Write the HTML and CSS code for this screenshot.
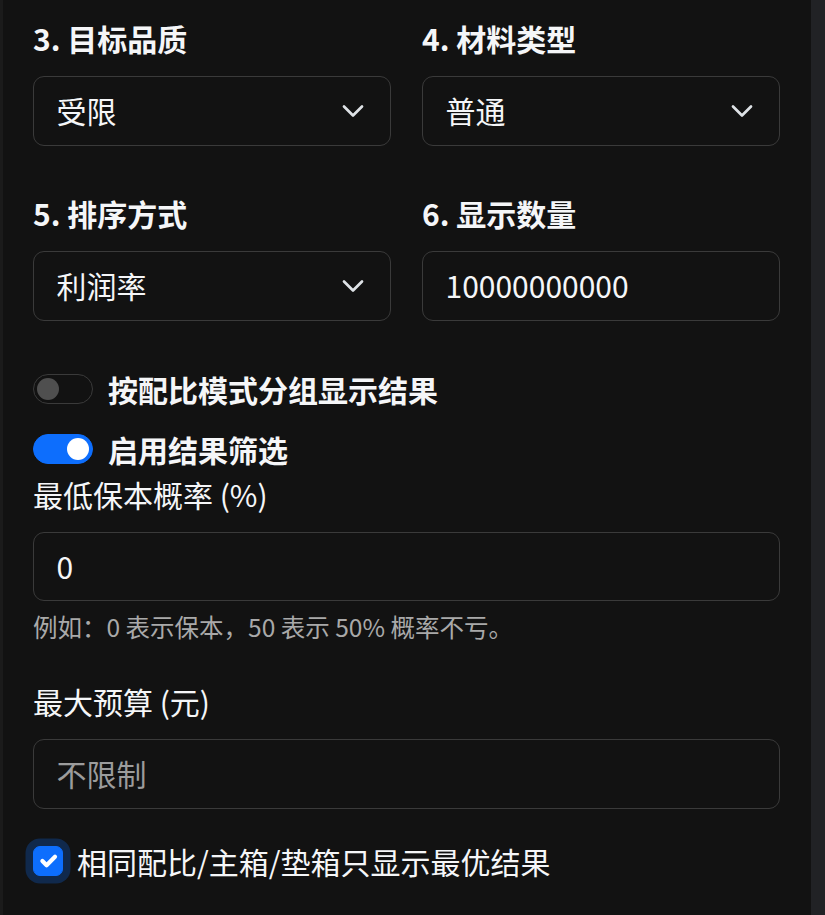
FILE: index.html
```html
<!DOCTYPE html>
<html lang="zh-CN">
<head>
<meta charset="utf-8">
<title>筛选设置</title>
<link rel="stylesheet" href="styles.css">
</head>
<body>
<div class="page">
  <div class="edge-left"></div>
  <main class="panel">
    <div class="field-grid">
      <div class="field">
        <div class="label">3. 目标品质</div>
        <div class="control select"><span>受限</span><svg class="chevron" viewBox="0 0 16 16"><path d="m2 5 6 6 6-6"/></svg></div>
      </div>
      <div class="field">
        <div class="label">4. 材料类型</div>
        <div class="control select"><span>普通</span><svg class="chevron" viewBox="0 0 16 16"><path d="m2 5 6 6 6-6"/></svg></div>
      </div>
      <div class="field">
        <div class="label">5. 排序方式</div>
        <div class="control select"><span>利润率</span><svg class="chevron" viewBox="0 0 16 16"><path d="m2 5 6 6 6-6"/></svg></div>
      </div>
      <div class="field">
        <div class="label">6. 显示数量</div>
        <div class="control"><span>10000000000</span></div>
      </div>
    </div>

    <div class="switch-row first">
      <span class="switch"><span class="knob"></span></span>
      <span>按配比模式分组显示结果</span>
    </div>
    <div class="switch-row">
      <span class="switch on"><span class="knob"></span></span>
      <span>启用结果筛选</span>
    </div>

    <div class="label plain">最低保本概率 (%)</div>
    <div class="control"><span>0</span></div>
    <div class="help">例如：0 表示保本，50 表示 50% 概率不亏。</div>

    <div class="label plain">最大预算 (元)</div>
    <div class="control"><span class="placeholder">不限制</span></div>

    <div class="check-row">
      <span class="checkbox"><svg viewBox="0 0 20 20"><path d="m6 10 3 3 6-6"/></svg></span>
      <span>相同配比/主箱/垫箱只显示最优结果</span>
    </div>
  </main>
  <div class="edge-right"></div>
</div>
</body>
</html>
```

FILE: styles.css
```css
* { box-sizing: border-box; }
html, body { margin: 0; height: 100%; }
body {
  background: #121212;
  color: #f5f6f8;
  font-family: "Noto Sans CJK SC", "Noto Sans", sans-serif;
  font-size: 30px;
  line-height: 45px;
  overflow: hidden;
}
.page { display: flex; height: 915px; }
.edge-left { width: 3px; background: #1b1b1b; }
.edge-right { width: 14px; background: #212225; }
.panel { flex: 1; padding: 16px 31px 0 30px; }

.field-grid {
  display: grid;
  grid-template-columns: 1fr 1fr;
  column-gap: 31px;
  row-gap: 45.5px;
  margin-bottom: 46px;
}
.label { display: block; margin-bottom: 15px; font-weight: 700; }
.label.plain { font-weight: 400; }

.control {
  display: flex;
  align-items: center;
  height: 69.5px;
  padding: 0 22.5px;
  border: 1px solid #3a3a3a;
  border-radius: 11px;
  background: #121212;
  color: #f5f6f8;
}
.select { justify-content: space-between; padding-right: 25px; }
.chevron {
  width: 24px;
  height: 24px;
  fill: none;
  stroke: #dee2e6;
  stroke-width: 1.8;
  stroke-linecap: round;
  stroke-linejoin: round;
}
.placeholder { color: #9c9c9c; }

.switch-row {
  display: flex;
  align-items: center;
  gap: 15px;
  height: 45px;
  font-weight: 700;
}
.switch-row.first { margin-bottom: 15px; }
.switch {
  display: flex;
  align-items: center;
  width: 60px;
  height: 30px;
  padding: 0 2.75px;
  border: 1px solid #3a3a3a;
  border-radius: 15px;
  flex: none;
}
.knob {
  width: 22.5px;
  height: 22.5px;
  border-radius: 50%;
  background: #4f4f4f;
}
.switch.on {
  justify-content: flex-end;
  background: #0d6efd;
  border-color: #0d6efd;
}
.switch.on .knob { background: #fff; }

.help {
  margin-top: 8px;
  margin-bottom: 34px;
  font-size: 24.5px;
  line-height: 36px;
  color: #a9a9a9;
}

.check-row {
  display: flex;
  align-items: center;
  gap: 14px;
  height: 45px;
  margin-top: 30px;
}
.checkbox {
  display: flex;
  width: 30px;
  height: 30px;
  border-radius: 7px;
  background: #0d6efd;
  border: 1px solid #0d6efd;
  box-shadow: 0 0 0 7.5px rgba(13, 110, 253, 0.25);
  flex: none;
}
.checkbox svg {
  width: 100%;
  height: 100%;
  fill: none;
  stroke: #fff;
  stroke-width: 3;
  stroke-linecap: round;
  stroke-linejoin: round;
}
```
